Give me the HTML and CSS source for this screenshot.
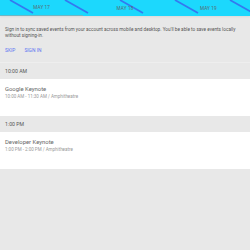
FILE: index.html
```html
<!DOCTYPE html>
<html lang="en">
<head>
<meta charset="UTF-8" />
<meta name="viewport" content="width=device-width, initial-scale=1" />
<title>Schedule</title>
<link rel="stylesheet" href="styles.css">
</head>
<body>

<header class="tabs">
  <svg class="stripes" width="250" height="16" viewBox="0 0 250 16">
    <line x1="10" y1="0" x2="33" y2="13" />
    <line x1="65" y1="0" x2="88" y2="13" />
    <line x1="120" y1="0" x2="143" y2="13" />
    <line x1="175" y1="0" x2="198" y2="13" />
    <line x1="230" y1="0" x2="253" y2="13" />
  </svg>
  <div class="tab active">MAY 17</div>
  <div class="tab">MAY 18</div>
  <div class="tab">MAY 19</div>
</header>

<section class="intro">
  <p>Sign in to sync saved events from your account across mobile and desktop. You'll be able to save events locally without signing-in.</p>
  <div class="actions">
    <button>SKIP</button>
    <button>SIGN IN</button>
  </div>
</section>

<div class="time">10:00 AM</div>
<div class="event">
  <div class="title">Google Keynote</div>
  <div class="meta">10:00 AM - 11:30 AM / Amphitheatre</div>
</div>

<div class="time">1:00 PM</div>
<div class="event">
  <div class="title">Developer Keynote</div>
  <div class="meta">1:00 PM - 2:00 PM / Amphitheatre</div>
</div>

</body>
</html>
```

FILE: styles.css
```css
body {
  margin: 0;
  background: #e8e8e8;
  font-family: Roboto, "Liberation Sans", sans-serif;
  height: 250px;
  overflow: hidden;
}
.tabs {
  position: relative;
  display: flex;
  height: 16px;
  background: #1cd8fd;
  box-shadow: 0 1px 2px rgba(0, 0, 0, 0.06);
}
.stripes {
  position: absolute;
  left: 0;
  top: 0;
}
.stripes line {
  stroke: #3478f0;
  stroke-width: 1.7;
}
.tab {
  position: relative;
  flex: 1;
  display: flex;
  align-items: center;
  justify-content: center;
  font-size: 4.7px;
  color: #5b6a70;
  letter-spacing: 0.1px;
}
.tab.active {
  border-bottom: 1.5px solid #6fb6c4;
}
.intro {
  padding: 11px 5px 0 5px;
  height: 35px;
  border-bottom: 1px solid #eeeeee;
}
.intro p {
  margin: 0;
  font-size: 4.7px;
  line-height: 6px;
  color: #555;
}
.actions {
  display: flex;
  gap: 9px;
  margin-top: 8px;
}
.actions button {
  border: none;
  background: none;
  padding: 0;
  font-family: inherit;
  font-size: 4.9px;
  color: #5a74f2;
}
.time {
  height: 16px;
  line-height: 16px;
  padding-left: 5px;
  font-size: 5.2px;
  color: #555;
}
.event {
  background: #fff;
  height: 37px;
  padding: 6px 5px 0 5px;
  box-sizing: border-box;
}
.title {
  font-size: 5.9px;
  line-height: 8px;
  color: #666;
}
.meta {
  font-size: 4.5px;
  line-height: 6px;
  color: #999;
  margin-top: 1px;
}
```
